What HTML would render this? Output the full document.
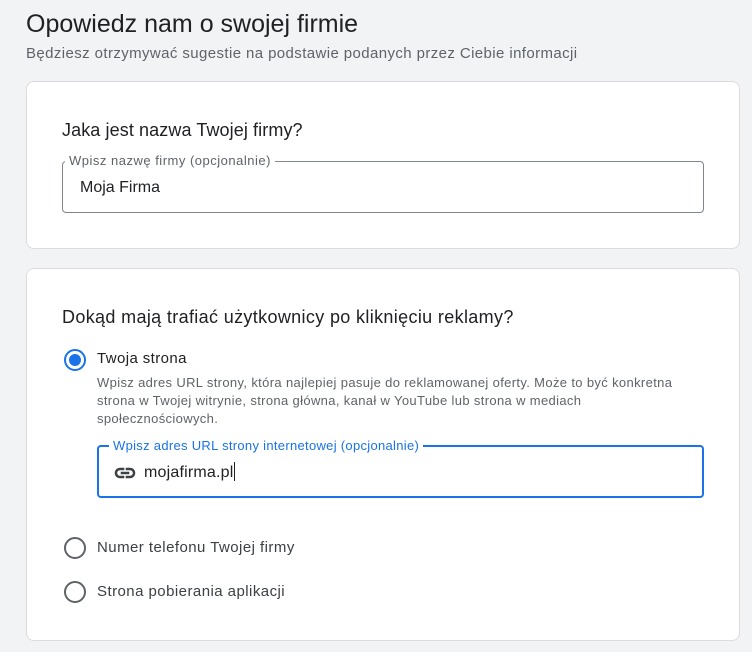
<!DOCTYPE html>
<html><head><meta charset="utf-8"><style>
*{margin:0;padding:0;box-sizing:border-box}
body{width:752px;height:652px;background:#f1f3f4;font-family:"Liberation Sans",Arial,sans-serif;position:relative;overflow:hidden;color:#202124}
.abs{position:absolute;white-space:nowrap}
.card{position:absolute;left:26px;width:714px;background:#fff;border:1px solid #dadce0;border-radius:8px}
.inp{position:absolute;border:1px solid #80868b;border-radius:4px}
.lab{position:absolute;top:-9px;background:#fff;padding:0 4px;font-size:13px;color:#5f6368;line-height:16px;letter-spacing:0.5px}
.radio{position:absolute;width:22px;height:22px;border:2px solid #5f6368;border-radius:50%}
</style></head><body>
<div class="abs" style="left:26px;top:8px;font-size:25px;line-height:32px;color:#202124">Opowiedz nam o swojej firmie</div>
<div class="abs" style="left:26px;top:45px;font-size:15px;line-height:18px;color:#5f6368;letter-spacing:0.4px">Będziesz otrzymywać sugestie na podstawie podanych przez Ciebie informacji</div>

<div class="card" style="top:81px;height:168px"></div>
<div class="abs" style="left:62px;top:119px;font-size:18px;line-height:22px;letter-spacing:0.1px">Jaka jest nazwa Twojej firmy?</div>
<div class="inp" style="left:62px;top:161px;width:642px;height:52px">
<span class="lab" style="left:2px">Wpisz nazwę firmy (opcjonalnie)</span>
<span class="abs" style="left:17px;top:16px;font-size:16px;line-height:20px">Moja Firma</span></div>

<div class="card" style="top:268px;height:373px"></div>
<div class="abs" style="left:62px;top:306px;font-size:18px;line-height:22px;letter-spacing:0.35px">Dokąd mają trafiać użytkownicy po kliknięciu reklamy?</div>
<div class="radio" style="left:64px;top:349px;border-color:#1a73e8"><div style="position:absolute;left:3px;top:3px;width:12px;height:12px;border-radius:50%;background:#1a73e8"></div></div>
<div class="abs" style="left:97px;top:350px;font-size:15px;line-height:18px;letter-spacing:0.4px">Twoja strona</div>
<div class="abs" style="left:97px;top:374px;font-size:13px;line-height:18px;color:#5f6368;white-space:normal;width:590px;letter-spacing:0.35px">Wpisz adres URL strony, która najlepiej pasuje do reklamowanej oferty. Może to być konkretna strona w Twojej witrynie, strona główna, kanał w YouTube lub strona w mediach społecznościowych.</div>
<div class="inp" style="left:97px;top:445px;width:607px;height:53px;border:2px solid #1a73e8">
<span class="lab" style="left:10px;color:#1a73e8;letter-spacing:0.3px">Wpisz adres URL strony internetowej (opcjonalnie)</span>
<svg class="abs" style="left:14px;top:14px" width="24" height="24" viewBox="0 0 24 24"><path fill="#3c4043" stroke="#3c4043" stroke-width="0.6" d="M3.9 12c0-1.71 1.39-3.1 3.1-3.1h4V7H7c-2.76 0-5 2.240-5 5s2.24 5 5 5h4v-1.9H7c-1.71 0-3.1-1.39-3.1-3.1zM8 13h8v-2H8v2zm9-6h-4v1.9h4c1.71 0 3.1 1.39 3.1 3.1s-1.39 3.1-3.1 3.1h-4V17h4c2.76 0 5-2.24 5-5s-2.24-5-5-5z"/></svg>
<span class="abs" style="left:45px;top:15px;font-size:16px;line-height:20px;letter-spacing:0.2px">mojafirma.pl<span style="display:inline-block;width:1px;height:19px;background:#202124;vertical-align:-4px"></span></span></div>

<div class="radio" style="left:64px;top:537px"></div>
<div class="abs" style="left:97px;top:539px;font-size:15px;line-height:18px;color:#3c4043;letter-spacing:0.45px">Numer telefonu Twojej firmy</div>
<div class="radio" style="left:64px;top:581px"></div>
<div class="abs" style="left:97px;top:583px;font-size:15px;line-height:18px;color:#3c4043;letter-spacing:0.45px">Strona pobierania aplikacji</div>
</body></html>
